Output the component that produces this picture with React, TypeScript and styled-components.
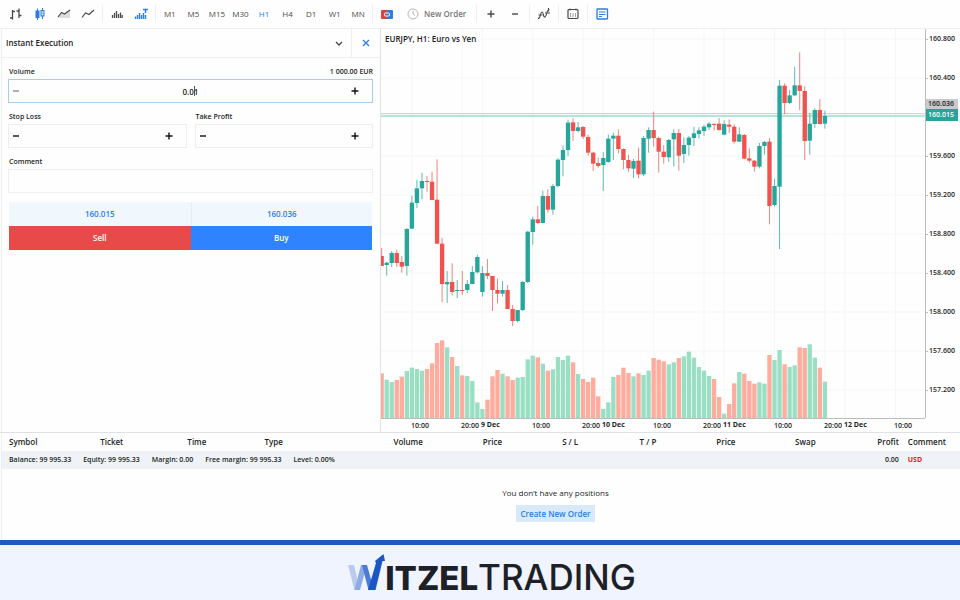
import React from "react";
import styled, { createGlobalStyle, css } from "styled-components";

const GlobalStyle = createGlobalStyle`
  * { box-sizing: border-box; }
  html, body, #root { height: 100%; }
  body {
    margin: 0;
    background: #fefefe;
    color: #1c1f24;
    font-family: "Open Sans", "Noto Sans", sans-serif;
    font-size: 8px;
    line-height: 12px;
    font-weight: 500;
  }
  button, input { font: inherit; color: inherit; }
  button { background: none; border: 0; padding: 0; cursor: pointer; }
`;

const Page = styled.div`
  min-height: 100vh;
  display: flex;
  flex-direction: column;
`;

/* ---------- Toolbar ---------- */

const Toolbar = styled.header`
  display: flex;
  align-items: center;
  height: 29px;
  padding-left: 4px;
  border-bottom: 1px solid #eeeff1;
`;

const ToolButton = styled.button<{ $active?: boolean }>`
  display: flex;
  align-items: center;
  justify-content: center;
  width: 24px;
  height: 24px;
  color: ${(p) => (p.$active ? "#2b7de9" : "#4a4a4a")};
`;

const Divider = styled.span`
  width: 1px;
  height: 18px;
  margin: 0 2px;
  background: #eeeff1;
`;

const Periods = styled.div`
  display: grid;
  grid-template-columns: repeat(9, 1fr);
  width: 212px;
  ${ToolButton} { width: auto; }
`;

const OrderButton = styled.button`
  display: flex;
  align-items: center;
  gap: 5px;
  height: 24px;
  padding: 0 8px;
  color: #777;
  font-weight: 600;
`;

const periods = ["M1", "M5", "M15", "M30", "H1", "H4", "D1", "W1", "MN"];

const Icon = ({ w = 14, h = 14, children }: { w?: number; h?: number; children: React.ReactNode }) => (
  <svg width={w} height={h} viewBox={`0 0 ${w} ${h}`} fill="none" stroke="currentColor" aria-hidden="true">
    {children}
  </svg>
);

const TopBar = () => (
  <Toolbar>
    <ToolButton aria-label="Bars">
      <Icon><path d="M1 11h2.500M3.500 3v9.500M3.500 4.500H6M7.500 4H10M10 1.500v9.500M10 8.500h2.500" strokeWidth="1.300" /></Icon>
    </ToolButton>
    <ToolButton $active aria-label="Candles">
      <Icon>
        <path d="M4.500 1.500v11.500M9.500 1v11" />
        <rect x="3" y="4" width="3" height="6.500" fill="currentColor" />
        <rect x="8" y="3.500" width="3" height="5.500" fill="#b9d7fb" />
      </Icon>
    </ToolButton>
    <ToolButton aria-label="Area">
      <Icon>
        <path d="M1 10l3.500-4L7 7.500 13 3v8H1z" fill="#ddd" stroke="none" />
        <path d="M1 10l3.500-4.500L7.500 7 13 3" strokeWidth="1.200" />
      </Icon>
    </ToolButton>
    <ToolButton aria-label="Line">
      <Icon><path d="M1 10.500L4.500 6l3.500 1.500L13 3" strokeWidth="1.200" /></Icon>
    </ToolButton>
    <Divider />
    <ToolButton aria-label="Volumes">
      <Icon><path d="M2.500 11V8M4.500 11V6M6.500 11V4M8.500 11V7M10.500 11V5.500M12.200 11V8" strokeWidth="1.300" /></Icon>
    </ToolButton>
    <ToolButton $active aria-label="Tick volumes">
      <Icon><path d="M1.500 12V9.500M3.500 12V8M5.500 12V6M7.500 12V8M9.500 12V6M11.500 12V8" strokeWidth="1.400" /><path d="M9 2.500h5M11.500 2.500V6" strokeWidth="1.400" /></Icon>
    </ToolButton>
    <Divider />
    <Periods>
      {periods.map((p) => (
        <ToolButton key={p} $active={p === "H1"}>{p}</ToolButton>
      ))}
    </Periods>
    <Divider />
    <ToolButton aria-label="One-click trading">
      <svg width="12" height="9" viewBox="0 0 12 9" aria-hidden="true">
        <path d="M1 0h5v9H1a1 1 0 0 1-1-1V1a1 1 0 0 1 1-1z" fill="#e0433f" />
        <path d="M6 0h5a1 1 0 0 1 1 1v7a1 1 0 0 1-1 1H6z" fill="#2b7de9" />
        <rect x="3.500" y="3" width="5" height="3" rx="1" fill="none" stroke="#fff" />
      </svg>
    </ToolButton>
    <OrderButton>
      <svg width="12" height="12" viewBox="0 0 12 12" fill="none" stroke="#b5b5b5" aria-hidden="true">
        <circle cx="6" cy="6" r="5" /><path d="M6 3v3l2 1.500" />
      </svg>
      New Order
    </OrderButton>
    <Divider />
    <ToolButton aria-label="Zoom in"><Icon><path d="M3.500 7h7M7 3.500v7" strokeWidth="1.400" /></Icon></ToolButton>
    <ToolButton aria-label="Zoom out"><Icon><path d="M4 7h6" strokeWidth="1.400" /></Icon></ToolButton>
    <Divider />
    <ToolButton aria-label="Indicators">
      <Icon><path d="M1 11.500C4 11.500 3 5 5 5s1 6 3 5S9 3 12.500 2.500M1.500 8h4M8 6h5M11.500 1v3.500" strokeWidth="1.100" /></Icon>
    </ToolButton>
    <Divider />
    <ToolButton aria-label="Calendar">
      <Icon><rect x="2" y="2.500" width="10" height="9" rx="1" strokeWidth="1.200" /><path d="M4 1.500v2M10 1.500v2" /><path d="M4 7h6M4 9h6" strokeDasharray="1 1.500" /></Icon>
    </ToolButton>
    <Divider />
    <ToolButton $active aria-label="Trade panel">
      <Icon><rect x="2" y="2" width="10.500" height="10" rx="0.500" strokeWidth="1.300" /><path d="M4 5h6.500M4 7.500h6.500M4 9.500h3" strokeWidth="1.100" /></Icon>
    </ToolButton>
  </Toolbar>
);

/* ---------- Order panel ---------- */

const Workspace = styled.main`
  display: grid;
  grid-template-columns: 380px minmax(0, 1fr);
  border-bottom: 1px solid #dfe1e4;
`;

const Panel = styled.section`
  margin-left: 1px;
  border-left: 1px solid #eceef0;
`;

const PanelHead = styled.div`
  display: flex;
  align-items: center;
  height: 29px;
  border-bottom: 1px solid #eeeff1;
`;

const PanelTitle = styled.h1`
  flex: 1;
  margin: 0;
  padding-left: 4px;
  font-size: 8px;
  font-weight: 600;
`;

const HeadButton = styled.button<{ $blue?: boolean }>`
  display: flex;
  align-items: center;
  justify-content: center;
  width: ${(p) => (p.$blue ? 29 : 24)}px;
  height: 28px;
  color: ${(p) => (p.$blue ? "#2b7de9" : "#444")};
  ${(p) => p.$blue && css`border-left: 1px solid #eceef0;`}
`;

const Form = styled.form`
  display: flex;
  flex-direction: column;
  gap: 7px;
  padding: 7px 7px 0 6px;
`;

const FieldRow = styled.div`
  display: flex;
  gap: 8px;
`;

const Field = styled.div`
  flex: 1;
  min-width: 0;
`;

const LabelLine = styled.div`
  display: flex;
  justify-content: space-between;
  height: 14px;
  padding-left: 1px;
  font-size: 7px;
  line-height: 14px;
  font-weight: 600;
`;

const Stepper = styled.div<{ $focus?: boolean }>`
  position: relative;
  display: flex;
  align-items: center;
  height: 24px;
  border: 1px solid ${(p) => (p.$focus ? "#a3cdf5" : "#eceeef")};
`;

const StepButton = styled.button<{ $muted?: boolean; $plus?: boolean }>`
  display: flex;
  align-items: center;
  justify-content: center;
  width: ${(p) => (p.$plus ? 34 : 14)}px;
  height: 22px;
  flex: none;
  color: ${(p) => (p.$muted ? "#8a8f96" : "#111")};
`;

const TextInput = styled.input<{ $boxed?: boolean }>`
  display: block;
  width: 100%;
  min-width: 0;
  height: ${(p) => (p.$boxed ? 24 : 22)}px;
  padding: 0 0 0 20px;
  border: ${(p) => (p.$boxed ? "1px solid #eceeef" : "0")};
  background: transparent;
  font-weight: 600;
  text-align: center;
  outline: none;
`;

const Caret = styled.span`
  position: absolute;
  left: calc(50% + 3px);
  top: 6px;
  width: 1px;
  height: 10px;
  background: #555;
`;

const Deal = styled.div`
  display: grid;
  grid-template-columns: 1fr 1fr;
  margin: 2px 1px 0;
`;

const Quote = styled.output<{ $line?: boolean }>`
  display: flex;
  align-items: center;
  justify-content: center;
  height: 24px;
  background: #f0f8fe;
  color: #2b7de9;
  font-weight: 600;
  ${(p) => p.$line && css`border-left: 1px solid #e3eef7;`}
`;

const DealButton = styled.button<{ $side: "sell" | "buy" }>`
  height: 24px;
  color: #fff;
  font-weight: 600;
  background: ${(p) => (p.$side === "sell" ? "#e84a4a" : "#2f83fe")};
`;

const Plus = () => <Icon w={8} h={8}><path d="M.5 4h7M4 .5v7" strokeWidth="1.400" /></Icon>;
const Minus = () => <Icon w={8} h={8}><path d="M1 4h6" strokeWidth="1.400" /></Icon>;

const NumberField = ({ id, label, value = "", note, focus }: { id: string; label: string; value?: string; note?: string; focus?: boolean }) => (
  <Field>
    <LabelLine>
      <label htmlFor={id}>{label}</label>
      {note && <span>{note}</span>}
    </LabelLine>
    <Stepper $focus={focus}>
      <StepButton type="button" $muted={focus} aria-label={`Decrease ${label}`}><Minus /></StepButton>
      <TextInput id={id} defaultValue={value} />
      {focus && <Caret />}
      <StepButton type="button" $plus aria-label={`Increase ${label}`}><Plus /></StepButton>
    </Stepper>
  </Field>
);

const OrderPanel = () => (
  <Panel>
    <PanelHead>
      <PanelTitle>Instant Execution</PanelTitle>
      <HeadButton aria-label="Order type"><Icon w={8} h={8}><path d="M1 3l3 3 3-3" strokeWidth="1.300" /></Icon></HeadButton>
      <HeadButton $blue aria-label="Close"><Icon w={8} h={8}><path d="M1 1l6 6M7 1L1 7" strokeWidth="1.300" /></Icon></HeadButton>
    </PanelHead>
    <Form onSubmit={(e) => e.preventDefault()}>
      <NumberField id="volume" label="Volume" value="0.01" note="1 000.00 EUR" focus />
      <FieldRow>
        <NumberField id="sl" label="Stop Loss" />
        <NumberField id="tp" label="Take Profit" />
      </FieldRow>
      <Field>
        <LabelLine><label htmlFor="comment">Comment</label></LabelLine>
        <TextInput id="comment" $boxed />
      </Field>
      <Deal>
        <Quote>160.015</Quote>
        <Quote $line>160.036</Quote>
        <DealButton type="button" $side="sell">Sell</DealButton>
        <DealButton type="button" $side="buy">Buy</DealButton>
      </Deal>
    </Form>
  </Panel>
);

/* ---------- Chart ---------- */

const ChartBox = styled.section`
  position: relative;
  display: grid;
  grid-template-columns: minmax(0, 1fr) 35px;
  grid-template-rows: 389px 14px;
  border-left: 1px solid #dfe1e4;
`;

const ChartTitle = styled.h2`
  position: absolute;
  left: 4px;
  top: 4px;
  margin: 0;
  font-size: 8px;
  font-weight: 600;
`;

const Plot = styled.svg`
  display: block;
  width: 100%;
  height: 100%;
`;

const PriceAxis = styled.div`
  display: flex;
  flex-direction: column;
  gap: 27px;
  padding-top: 4px;
  border-left: 1px solid #b9bbbe;
  font-size: 7px;
  font-weight: 600;
`;

const PriceLabel = styled.div`
  position: relative;
  display: flex;
  align-items: center;
  gap: 1px;
  height: 12px;
  &::before { content: ""; width: 2px; height: 1px; background: #b9bbbe; }
`;

const Badges = styled.div`
  position: absolute;
  top: -12px;
  left: 0;
  right: 2px;
`;

const Badge = styled.div<{ $bid?: boolean }>`
  height: ${(p) => (p.$bid ? 12 : 10)}px;
  line-height: ${(p) => (p.$bid ? 12 : 10)}px;
  padding-left: 2px;
  background: ${(p) => (p.$bid ? "#26a69a" : "#c9cacb")};
  color: ${(p) => (p.$bid ? "#fff" : "#222")};
`;

const TimeAxis = styled.div`
  display: grid;
  grid-template-columns: 30fr 50fr 20fr 51fr 50fr 20fr 51fr 50fr 20fr 51fr 50fr 20fr 50fr 31fr;
  border-top: 1px solid #b9bbbe;
  font-size: 7px;
  line-height: 14px;
  font-weight: 600;
  white-space: nowrap;
`;

const TimeLabel = styled.span<{ $day?: boolean }>`
  min-width: 0;
  ${(p) => p.$day && css`font-weight: 700; line-height: 12px;`}
`;

type Row = [number, number, number, number, number];
/* Each row: rising flag, body top, body bottom, wick top, wick bottom. */
const shift = (dy: number, rows: Row[]): Row[] =>
  rows.map(([u, a, b, c, d]) => [u, a + dy, b + dy, c + dy, d + dy]);

const candles: Row[] = [
  ...shift(333, [
    [0, 348, 378, 324, 378], [1, 368, 375, 366, 407], [1, 339, 369, 333, 381], [0, 339, 369, 330, 381],
    [0, 366, 380, 348, 398], [1, 267, 378, 264, 407], [1, 188, 266, 167, 267], [1, 145, 189, 120, 204],
    [1, 123, 145, 98, 178], [0, 123, 126, 108, 155], [0, 125, 180, 95, 181], [0, 179, 311, 58, 311],
    [0, 311, 432, 294, 487], [1, 426, 433, 393, 489], [0, 426, 456, 370, 466], [1, 450, 453, 420, 474],
    [0, 450, 453, 393, 465], [1, 432, 450, 420, 459], [1, 396, 432, 378, 433], [1, 351, 397, 344, 400],
    [1, 399, 456, 378, 470], [0, 399, 408, 357, 417], [0, 408, 450, 408, 513], [0, 450, 461, 415, 491],
    [1, 450, 461, 423, 470], [0, 450, 507, 435, 507], [0, 507, 543, 495, 558], [1, 510, 543, 510, 547],
    [1, 426, 510, 423, 513], [1, 275, 426, 273, 429], [1, 238, 276, 230, 314],
  ]),
  ...shift(213, [
    [0, 358, 369, 318, 372], [1, 288, 369, 272, 370], [0, 288, 329, 268, 338], [1, 258, 329, 252, 344],
    [1, 179, 258, 175, 262], [1, 150, 180, 136, 229], [1, 68, 150, 59, 168], [0, 67, 93, 55, 123],
    [1, 82, 93, 66, 97], [0, 81, 110, 78, 117], [0, 111, 158, 104, 167], [0, 158, 191, 155, 213],
    [0, 189, 198, 173, 203], [1, 174, 195, 157, 273], [1, 116, 186, 104, 188], [1, 107, 116, 98, 180],
    [0, 107, 147, 88, 160], [0, 147, 180, 145, 208], [0, 180, 205, 165, 215], [1, 183, 206, 177, 233],
    [0, 182, 223, 143, 235], [1, 114, 223, 108, 228], [1, 90, 116, 82, 158], [0, 90, 114, 35, 140],
    [0, 114, 155, 110, 218], [0, 155, 171, 136, 191], [1, 120, 172, 117, 185], [1, 99, 118, 88, 199],
    [0, 99, 167, 87, 212],
  ]),
  ...shift(33, [
    [1, 315, 342, 292, 369], [1, 293, 315, 288, 347], [1, 280, 294, 260, 318], [1, 271, 282, 262, 296],
    [1, 260, 273, 255, 287], [1, 251, 262, 246, 270], [0, 252, 255, 249, 272], [0, 251, 270, 234, 272],
    [1, 252, 284, 241, 286], [0, 254, 260, 238, 279], [0, 260, 305, 253, 311], [1, 283, 305, 262, 306],
    [0, 285, 356, 282, 358], [0, 355, 362, 325, 368], [0, 362, 380, 360, 395], [1, 318, 380, 309, 385],
    [1, 306, 318, 303, 344], [0, 305, 498, 294, 553], [1, 438, 495, 417, 500], [1, 137, 440, 120, 627],
    [0, 137, 189, 130, 223], [1, 166, 189, 150, 192], [1, 136, 166, 80, 168], [0, 136, 153, 37, 211],
    [0, 153, 303, 139, 360], [1, 251, 302, 219, 344], [1, 210, 252, 205, 264], [0, 210, 252, 177, 253],
    [1, 228, 251, 212, 266],
  ]),
];

/* Volume heights; a negative number is a falling hour. */
const volumes = [
  -134, 115, 108, -114, -124, 141, 151, 147, 142, -147, -164, -225, -233, 212, -183, 156, -128, 126, 111, 47,
  27, -55, -125, -144, 133, -125, -114, 121, 123, 176, 187, -182, 163, -142, 146, 183, 174, 187, -167, 132,
  -117, -108, -121, -65, 27, 47, 123, -129, -151, -135, 125, -134, 129, 142, -180, -175, -170, 161, 167, -180,
  185, 199, 181, 153, 142, 126, -117, -63, 13, -42, -104, 138, -133, -111, -103, 107, 103, -189, 174, 204,
  -161, 153, 158, -212, -210, 221, 181, -151, 109,
];

const W = 1632;
const H = 1167;
const at = (i: number) => 2 + i * 15.11;
const marks = [6, 16, 20, 30, 40, 44, 54, 64, 68, 78, 88, 92, 102];

const times = ["", "10:00", "20:00", "9 Dec", "10:00", "20:00", "10 Dec", "10:00", "20:00", "11 Dec", "10:00", "20:00", "12 Dec", "10:00"];
const prices = ["160.800", "160.400", "", "159.600", "159.200", "158.800", "158.400", "158.000", "157.600", "157.200"];

const Chart = () => (
  <ChartBox>
    <Plot viewBox={`0 0 ${W} ${H}`} preserveAspectRatio="none" role="img" aria-label="EURJPY hourly candles and volume">
      <g stroke="#f5f6f6" strokeWidth="3">
        {marks.map((m) => <path key={m} d={`M${at(m)} 0V${H}`} />)}
        {prices.map((_, i) => <path key={i} d={`M0 ${30 + i * 117}H${W}`} />)}
      </g>
      {volumes.map((v, i) => (
        <rect key={i} x={at(i) - 6.5} y={H - Math.abs(v)} width="13" height={Math.abs(v)} fill={v > 0 ? "#9adfc4" : "#fdac9e"} />
      ))}
      <path d={`M0 254H${W}`} stroke="#a9dbd1" strokeWidth="3" />
      <path d={`M0 261H${W}`} stroke="#7cc7ba" strokeWidth="3" />
      {candles.map(([up, a, b, c, d], i) => (
        <g key={i}>
          <path d={`M${at(i)} ${c}V${d}`} stroke={up ? "#5dbbae" : "#f08480"} strokeWidth="3" />
          <rect x={at(i) - 6.5} y={a} width="13" height={b - a} fill={up ? "#26a69a" : "#ef5350"} />
        </g>
      ))}
    </Plot>
    <PriceAxis>
      {prices.map((p, i) =>
        p ? (
          <PriceLabel key={i}>{p}</PriceLabel>
        ) : (
          <PriceLabel key={i}>
            <Badges>
              <Badge>160.036</Badge>
              <Badge $bid>160.015</Badge>
            </Badges>
          </PriceLabel>
        )
      )}
    </PriceAxis>
    <TimeAxis>
      {times.map((t, i) => <TimeLabel key={i} $day={t.includes("Dec")}>{t}</TimeLabel>)}
    </TimeAxis>
    <ChartTitle>EURJPY, H1: Euro vs Yen</ChartTitle>
  </ChartBox>
);

/* ---------- Positions ---------- */

const Positions = styled.section`
  flex: 1;
  margin-left: 1px;
  border-left: 1px solid #eceef0;
`;

const Table = styled.table`
  width: 100%;
  table-layout: fixed;
  border-collapse: collapse;
`;

const Cell = styled.td<{ $right?: boolean; $red?: boolean }>`
  height: 18px;
  padding: 0 4px 0 7px;
  text-align: ${(p) => (p.$right ? "right" : "left")};
  white-space: nowrap;
  font-weight: 600;
  ${(p) => p.$red && css`color: #e02424; font-weight: 700;`}
`;

const LastCell = styled(Cell)`
  padding-left: 5px;
`;

const Summary = styled.tr`
  background: #eff3f7;
  font-size: 7px;
`;

const Totals = styled.div`
  display: flex;
  gap: 12px;
`;

const Empty = styled.div`
  display: flex;
  flex-direction: column;
  align-items: center;
  gap: 6px;
  padding: 18px 0 0 149px;
`;

const CreateButton = styled.button`
  height: 17px;
  padding: 0 5px;
  background: #d8eafa;
  color: #2b7de9;
  font-weight: 600;
`;

const widths = [91, 87, 77, 86, 83, 79, 76, 78, 79, 80, 83, 57];
const heads = ["Symbol", "Ticket", "Time", "Type", "Volume", "Price", "S / L", "T / P", "Price", "Swap", "Profit"];

const Col = styled.col<{ $w: number }>`
  width: ${(p) => p.$w}px;
`;

const PositionsPanel = () => (
  <Positions>
    <Table>
      <colgroup>{widths.map((w, i) => <Col key={i} $w={w} />)}</colgroup>
      <thead>
        <tr>
          {heads.map((h, i) => <Cell as="th" scope="col" key={i} $right={i > 3}>{h}</Cell>)}
          <LastCell as="th" scope="col">Comment</LastCell>
        </tr>
      </thead>
      <tbody>
        <Summary>
          <Cell colSpan={10}>
            <Totals>
              <span>Balance: 99 995.33</span>
              <span>Equity: 99 995.33</span>
              <span>Margin: 0.00</span>
              <span>Free margin: 99 995.33</span>
              <span>Level: 0.00%</span>
            </Totals>
          </Cell>
          <Cell $right>0.00</Cell>
          <LastCell $red>USD</LastCell>
        </Summary>
      </tbody>
    </Table>
    <Empty>
      <span>You don’t have any positions</span>
      <CreateButton>Create New Order</CreateButton>
    </Empty>
  </Positions>
);

/* ---------- Brand footer ---------- */

const Footer = styled.footer`
  display: flex;
  justify-content: center;
  align-items: flex-start;
  height: 60px;
  padding: 9px 0 0 24px;
  border-top: 5px solid #2159bd;
  background: #eff4fe;
`;

const Mark = styled.svg`
  flex: none;
`;

const Wordmark = styled.div`
  display: flex;
  align-items: baseline;
  margin-top: 6px;
  font-family: Inter, "Liberation Sans", sans-serif;
  line-height: 34px;
  color: #1d2127;
`;

const Word = styled.span<{ $bold?: boolean }>`
  font-size: ${(p) => (p.$bold ? 33 : 35)}px;
  font-weight: ${(p) => (p.$bold ? 800 : 500)};
`;

const Brand = () => (
  <Footer>
    <Mark width="37" height="37" viewBox="0 0 37 37" role="img" aria-label="W">
      <path d="M0 11h6l6 25H6.500z" fill="#b9cbee" />
      <path d="M6.500 36L13 11h6l-7 25z" fill="#8fabe3" />
      <path d="M14 11h5l7 25h-5.500z" fill="#4b7ad8" />
      <path d="M20 36l8-27-1-2 8.500-7L37 7l-2.500 0L27.500 36z" fill="#1c56c4" />
    </Mark>
    <Wordmark>
      <Word $bold>ITZEL</Word>
      <Word>TRADING</Word>
    </Wordmark>
  </Footer>
);

export default function App() {
  return (
    <Page>
      <GlobalStyle />
      <TopBar />
      <Workspace>
        <OrderPanel />
        <Chart />
      </Workspace>
      <PositionsPanel />
      <Brand />
    </Page>
  );
}
